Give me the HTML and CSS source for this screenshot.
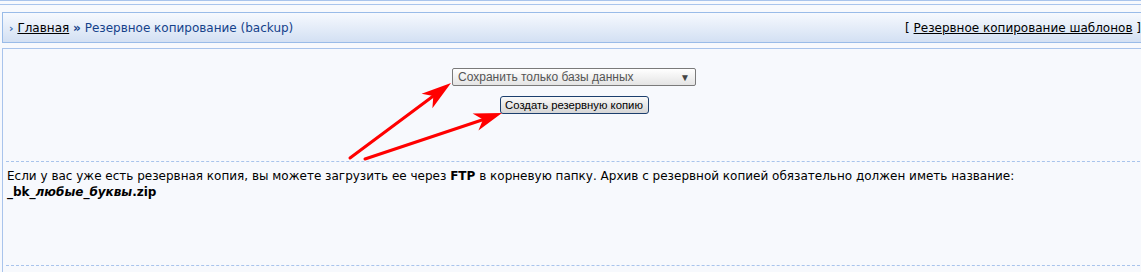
FILE: index.html
```html
<!DOCTYPE html>
<html lang="ru">
<head>
    <meta charset="UTF-8">
    <title>Резервное копирование (backup)</title>
    <link rel="stylesheet" href="styles.css">
</head>
<body>
    <div class="top-strip"></div>
    <div class="wrap">
        <div class="crumbs">
            <div class="crumbs-left">
                <span class="crumb-mark">›</span>
                <a href="#" class="crumb-link">Главная</a>
                <span class="crumb-sep">»</span>
                <span class="crumb-current">Резервное копирование (backup)</span>
            </div>
            <div class="crumbs-right">
                <span class="bracket">[</span>
                <a href="#" class="crumb-link">Резервное копирование шаблонов</a>
                <span class="bracket">]</span>
            </div>
        </div>

        <div class="panel">
            <div class="backup-form">
                <div class="fake-select">
                    <span>Сохранить только базы данных</span>
                    <span class="select-arrow">▼</span>
                </div>
                <button class="backup-btn">Создать резервную копию</button>
            </div>

            <div class="note">
                Если у вас уже есть резервная копия, вы можете загрузить ее через <b>FTP</b> в корневую папку. Архив с резервной копией обязательно должен иметь название:<br>
                <b>_bk<i>_любые_буквы</i>.zip</b>
            </div>
        </div>
    </div>

    <!-- стрелки-подсказки поверх скриншота -->
    <svg class="arrows" width="1141" height="272" viewBox="0 0 1141 272">
        <line x1="350" y1="158" x2="436" y2="94" stroke="#ff0000" stroke-width="3" stroke-linecap="round"/>
        <polygon points="451,83 421.6,93.8 433.3,96.1 432.4,108.2" fill="#ff0000"/>
        <line x1="365" y1="159" x2="485" y2="119" stroke="#ff0000" stroke-width="3" stroke-linecap="round"/>
        <polygon points="502,113 472.6,113.4 483,119.4 478.4,130.4" fill="#ff0000"/>
    </svg>
</body>
</html>
```

FILE: styles.css
```css
* {
    box-sizing: border-box;
}

body {
    margin: 0;
    background: #f7f9fd;
    font-family: "DejaVu Sans", Verdana, sans-serif;
    font-size: 12px;
    color: #000;
    overflow: hidden;
    position: relative;
    height: 272px;
}

.top-strip {
    height: 1px;
    background: #a9c4ec;
}

.wrap {
    margin-top: 3px;
    border-top: 1px solid #a9c4ec;
    padding-top: 7px;
}

.crumbs {
    margin: 0 -4px 0 2px;
    height: 31px;
    border: 1px solid #99bbe8;
    background: linear-gradient(#f6f9fe, #d3e0f3);
    display: flex;
    align-items: center;
    justify-content: space-between;
    padding: 0 3px 0 6px;
}

.crumb-mark {
    color: #3a6bb0;
    font-weight: bold;
    font-size: 11px;
}

.crumb-link {
    color: #000;
    text-decoration: underline;
}

.crumb-sep {
    color: #15428b;
    font-weight: bold;
}

.crumb-current {
    color: #15428b;
}

.bracket {
    color: #000;
}

.panel {
    margin: 5px -4px 0 2px;
    border-top: 1px solid #a9c4ec;
    border-left: 1px solid #a9c4ec;
    padding-top: 19px;
    height: 224px;
}

.backup-form {
    display: flex;
    flex-direction: column;
    align-items: center;
    gap: 10px;
}

.fake-select {
    width: 244px;
    height: 18px;
    border: 1px solid #7a7a7a;
    border-radius: 2px;
    background: linear-gradient(#ffffff, #e4e4e4);
    color: #555;
    display: flex;
    align-items: center;
    justify-content: space-between;
    padding: 0 5px 0 5px;
    font-family: "Liberation Sans", Arial, sans-serif;
    font-size: 12px;
}

.select-arrow {
    font-size: 10px;
    color: #444;
}

.backup-btn {
    width: 149px;
    height: 18px;
    border: 1px solid #1c3f6e;
    border-radius: 3px;
    background: linear-gradient(#fafafa, #d6d6d6);
    font-family: "Liberation Sans", Arial, sans-serif;
    font-size: 11.3px;
    white-space: nowrap;
    color: #000;
    padding: 0;
}

.note {
    margin: 47px 0 0 3px;
    border-top: 1px dashed #a9c4ec;
    border-bottom: 1px dashed #a9c4ec;
    padding: 6px 0 0 1px;
    height: 105px;
    line-height: 16px;
}

.arrows {
    position: absolute;
    top: 0;
    left: 0;
    pointer-events: none;
}
```
